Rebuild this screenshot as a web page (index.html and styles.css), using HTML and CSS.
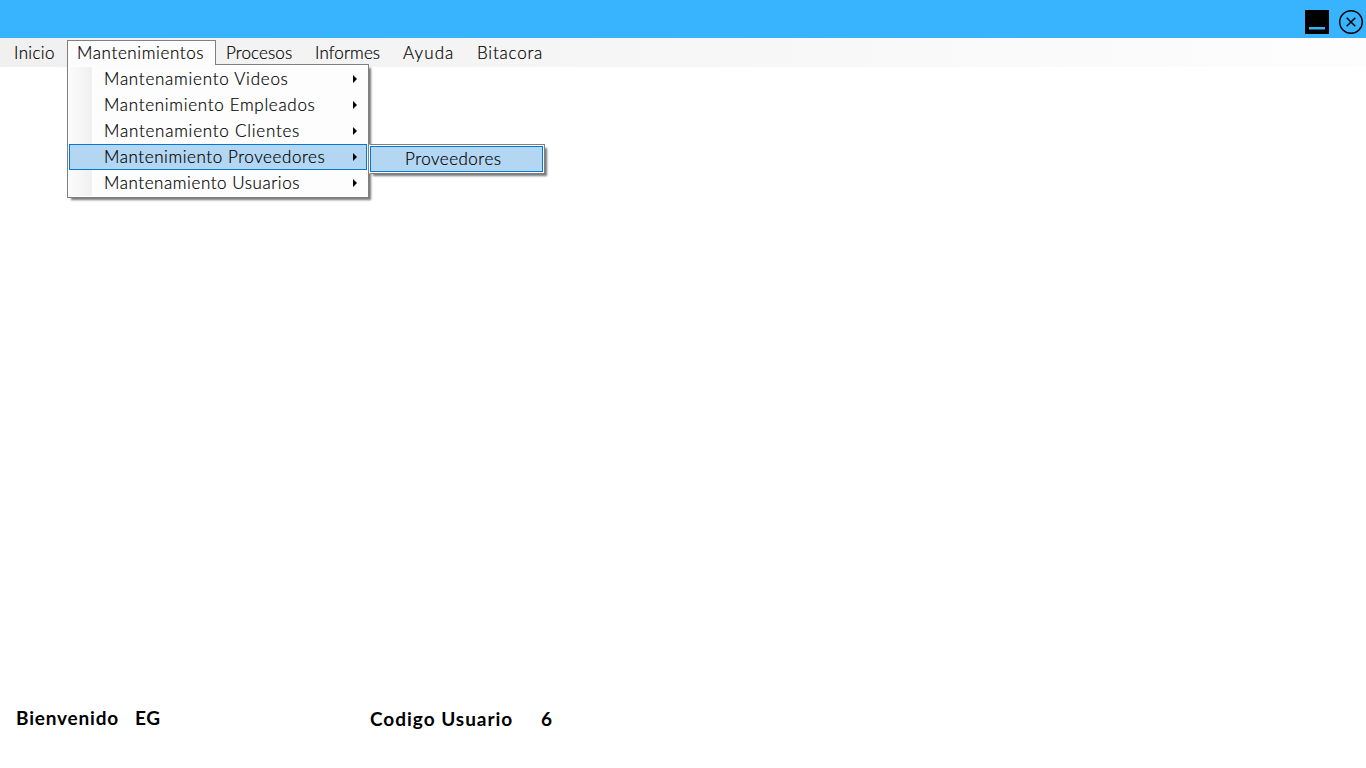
FILE: index.html
```
<!DOCTYPE html>
<html lang="es">
<head>
<meta charset="utf-8">
<title>Mantenimientos</title>
<link rel="stylesheet" href="styles.css">
</head>
<body>
<header class="titlebar">
  <svg class="icon" width="24" height="24" viewBox="0 0 24 24"><path d="M0 0h24v24H0z"/><path class="dash" d="M4 17h16v2.5H4z"/></svg>
  <svg class="icon" width="24" height="24" viewBox="0 0 24 24"><circle class="stroke" cx="12" cy="12" r="11.3"/><path class="stroke cross" d="M7.7 7.7l8.6 8.6M16.3 7.7l-8.6 8.6"/></svg>
</header>
<nav class="menubar">
  <div class="tab inicio">Inicio</div>
  <div class="tab open"><span>Mantenimientos</span>
    <ul class="dropdown">
      <li class="item videos">Mantenamiento Videos<i class="arrow"></i></li>
      <li class="item empleados">Mantenimiento Empleados<i class="arrow"></i></li>
      <li class="item clientes">Mantenamiento Clientes<i class="arrow"></i></li>
      <li class="item proveedores selected">Mantenimiento Proveedores<i class="arrow"></i>
        <ul class="submenu"><li class="subitem">Proveedores</li></ul>
      </li>
      <li class="item usuarios">Mantenamiento Usuarios<i class="arrow"></i></li>
    </ul>
  </div>
  <div class="tab procesos">Procesos</div>
  <div class="tab informes">Informes</div>
  <div class="tab ayuda">Ayuda</div>
  <div class="tab bitacora">Bitacora</div>
</nav>
<main class="workspace"></main>
<footer class="status">
  <span class="welcome">Bienvenido</span><span class="name">EG</span><span class="code">Codigo Usuario</span><span class="number">6</span>
</footer>
</body>
</html>
```
FILE: styles.css
```
* { box-sizing: border-box; }
body { margin: 0; height: 768px; display: flex; flex-direction: column; overflow: hidden; background: #fff; color: #000; font: 300 17px/24px "Century Gothic", Lato, sans-serif; }
ul { margin: 0; padding: 0; list-style: none; }
.titlebar { height: 38px; flex: none; background: #38b4ff; display: flex; justify-content: flex-end; gap: 10px; padding: 10px 3px 0 0; }
.icon { display: block; }
.dash { fill: #38b4ff; }
.stroke { fill: none; stroke: #000; stroke-width: 1.4; }
.cross { stroke-width: 1.5; }
.menubar { height: 29px; flex: none; display: flex; padding-top: 2px; background: linear-gradient(90deg, #f0f0f0, #fdfdfd); white-space: nowrap; -webkit-text-stroke: 0.2px #000; }
.tab { height: 25px; line-height: 26px; }
.inicio { width: 67px; padding-left: 14px; letter-spacing: 0.35px; }
.open { position: relative; width: 149px; padding-left: 9px; border: 1px solid #808080; border-bottom: 0; background: #fcfcfc; line-height: 24px; letter-spacing: 0.62px; }
.open > span { position: relative; z-index: 2; }
.open::after { content: ""; position: absolute; z-index: 2; left: 0; right: 0; bottom: -1px; height: 2px; background: #fcfcfc; }
.procesos { width: 99px; padding-left: 10px; letter-spacing: 0.12px; }
.informes { width: 88px; letter-spacing: 0.12px; }
.ayuda { width: 74px; letter-spacing: 1.1px; }
.bitacora { letter-spacing: 0.78px; }
.dropdown { position: absolute; z-index: 1; left: -1px; top: 23px; width: 302px; height: 134px; padding: 1px; border: 1px solid #808080; background: linear-gradient(90deg, #fcfcfc, #f0f0f0) 0 2px / 24px 129px no-repeat, #fdfdfd; box-shadow: 3px 3px 2px -1px #777; }
.item { position: relative; height: 26px; line-height: 26px; padding-left: 35px; }
.videos { letter-spacing: 0.75px; }
.empleados { letter-spacing: 0.7px; }
.clientes { letter-spacing: 0.76px; }
.proveedores { letter-spacing: 0.58px; }
.usuarios { letter-spacing: 0.57px; }
.selected { background: #b3d7f3; border: 1px solid #0078d7; padding-left: 34px; line-height: 24px; }
.arrow { position: absolute; right: 10px; top: 9px; border-left: 4px solid #000; border-top: 4px solid transparent; border-bottom: 4px solid transparent; }
.selected .arrow { right: 9px; top: 8px; }
.submenu { position: absolute; left: 299px; top: -1px; width: 176px; height: 30px; padding: 1px 1px 1px 0; border: 1px solid #808080; border-left-color: #fdfdfd; background: #fdfdfd; box-shadow: 3px 3px 2px -1px #777; }
.subitem { height: 26px; line-height: 24px; padding-left: 34px; border: 1px solid #0078d7; background: #b3d7f3; letter-spacing: 0.5px; }
.workspace { flex: 1; }
.status { height: 66px; flex: none; display: flex; padding: 4px 0 0 16px; font-size: 19px; font-weight: 700; white-space: nowrap; }
.welcome { width: 119px; letter-spacing: 0.8px; }
.name { width: 235px; letter-spacing: 0.7px; }
.code { width: 171px; letter-spacing: 0.98px; }
.code, .number { padding-top: 1px; }
```
